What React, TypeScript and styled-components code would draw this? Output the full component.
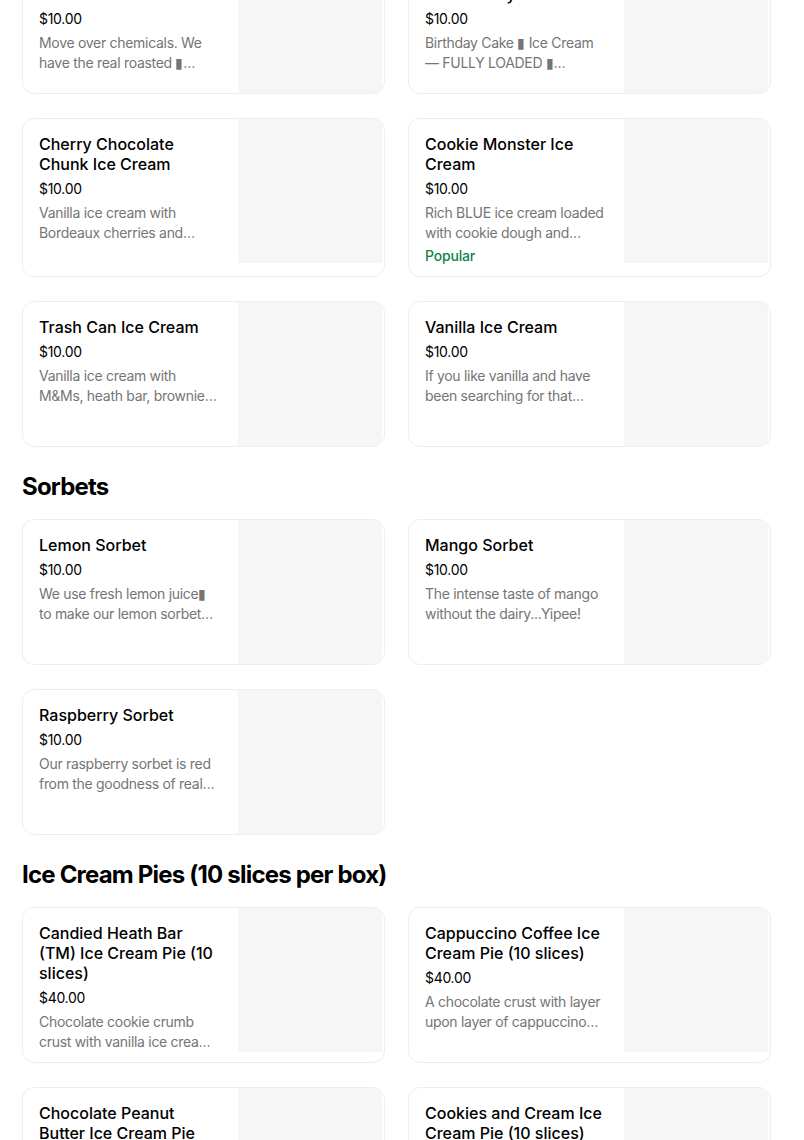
import styled, { createGlobalStyle } from "styled-components";

const GlobalStyle = createGlobalStyle`
  html, body {
    margin: 0;
    padding: 0;
    background: #ffffff;
  }
  body {
    font-family: Inter, "Liberation Sans", sans-serif;
    color: #000000;
    -webkit-font-smoothing: antialiased;
  }
`;

type Item = {
  name: string;
  price: string;
  description: string;
  popular?: boolean;
};

type Section = {
  title?: string;
  items: Item[];
};

const sections: Section[] = [
  {
    items: [
      {
        name: "Coffee Toffee Crunch Ice Cream",
        price: "$10.00",
        description: "Move over chemicals. We have the real roasted ▮ coffee-bean-infused cream.",
      },
      {
        name: "Birthday Cake Ice Cream Fully Loaded",
        price: "$10.00",
        description: "Birthday Cake ▮ Ice Cream — FULLY LOADED ▮ sprinkle-confetti-frosting.",
      },
      {
        name: "Cherry Chocolate Chunk Ice Cream",
        price: "$10.00",
        description: "Vanilla ice cream with Bordeaux cherries and semi-sweet chocolate chunks.",
      },
      {
        name: "Cookie Monster Ice Cream",
        price: "$10.00",
        description: "Rich BLUE ice cream loaded with cookie dough and chocolate chip cookies.",
        popular: true,
      },
      {
        name: "Trash Can Ice Cream",
        price: "$10.00",
        description: "Vanilla ice cream with M&Ms, heath bar, brownies, cookie dough and more.",
      },
      {
        name: "Vanilla Ice Cream",
        price: "$10.00",
        description: "If you like vanilla and have been searching for that perfect scoop.",
      },
    ],
  },
  {
    title: "Sorbets",
    items: [
      {
        name: "Lemon Sorbet",
        price: "$10.00",
        description: "We use fresh lemon juice▮ to\u00a0make our lemon sorbet extraordinarily tart.",
      },
      {
        name: "Mango Sorbet",
        price: "$10.00",
        description: "The intense taste of mango without the dairy...Yipee!",
      },
      {
        name: "Raspberry Sorbet",
        price: "$10.00",
        description: "Our raspberry sorbet is red from the goodness of real raspberries.",
      },
    ],
  },
  {
    title: "Ice Cream Pies (10 slices per box)",
    items: [
      {
        name: "Candied Heath Bar (TM) Ice Cream Pie (10 slices)",
        price: "$40.00",
        description: "Chocolate cookie crumb crust with vanilla ice cream and candied heath bar.",
      },
      {
        name: "Cappuccino Coffee Ice Cream Pie (10 slices)",
        price: "$40.00",
        description: "A chocolate crust with layer upon layer of cappuccino ice cream.",
      },
      {
        name: "Chocolate Peanut Butter Ice Cream Pie (10 slices)",
        price: "$40.00",
        description: "Chocolate cookie crust with peanut butter ice cream.",
      },
      {
        name: "Cookies and Cream Ice Cream Pie (10 slices)",
        price: "$40.00",
        description: "Cookie crust filled with cookies and cream ice cream.",
      },
    ],
  },
];

const Page = styled.main`
  width: 749px;
  margin: -52px 0 0 22px;
`;

const SectionBlock = styled.section`
  display: flex;
  flex-direction: column;
`;

const SectionTitle = styled.h2`
  margin: 24px 0 16px;
  font-size: 24px;
  line-height: 32px;
  font-weight: 700;
  letter-spacing: -0.8px;
  color: #000000;
`;

const Grid = styled.div`
  display: grid;
  grid-template-columns: 363px 363px;
  column-gap: 23px;
  row-gap: 24px;
`;

const Card = styled.div`
  display: flex;
  align-items: flex-start;
  border: 1px solid #eeeeee;
  border-radius: 12px;
  background: #ffffff;
  overflow: hidden;
`;

const Details = styled.div`
  flex: 1;
  min-width: 0;
  padding: 15px 16px 10px 16px;
  display: flex;
  flex-direction: column;
`;

const Name = styled.div`
  font-size: 16px;
  line-height: 20px;
  font-weight: 500;
  color: #000000;
`;

const Price = styled.div`
  margin-top: 5px;
  font-size: 14px;
  line-height: 20px;
  letter-spacing: -0.3px;
  color: #000000;
`;

const Description = styled.div`
  margin-top: 4px;
  font-size: 14px;
  line-height: 20px;
  letter-spacing: -0.3px;
  color: #757575;
  display: -webkit-box;
  -webkit-line-clamp: 2;
  -webkit-box-orient: vertical;
  overflow: hidden;
`;

const Badge = styled.div`
  margin-top: 3px;
  font-size: 14px;
  line-height: 20px;
  font-weight: 500;
  letter-spacing: -0.2px;
  color: #0e8345;
`;

const Thumb = styled.div`
  flex: 0 0 144px;
  height: 144px;
  margin-right: 2px;
  background: #f6f6f6;
`;

const MenuCard = ({ item }: { item: Item }) => (
  <Card>
    <Details>
      <Name>{item.name}</Name>
      <Price>{item.price}</Price>
      <Description>{item.description}</Description>
      {item.popular && <Badge>Popular</Badge>}
    </Details>
    <Thumb />
  </Card>
);

const App = () => {
  return (
    <>
      <GlobalStyle />
      <Page>
        {sections.map((section, i) => (
          <SectionBlock key={i}>
            {section.title && <SectionTitle>{section.title}</SectionTitle>}
            <Grid>
              {section.items.map((item) => (
                <MenuCard key={item.name} item={item} />
              ))}
            </Grid>
          </SectionBlock>
        ))}
      </Page>
    </>
  );
};

export default App;
